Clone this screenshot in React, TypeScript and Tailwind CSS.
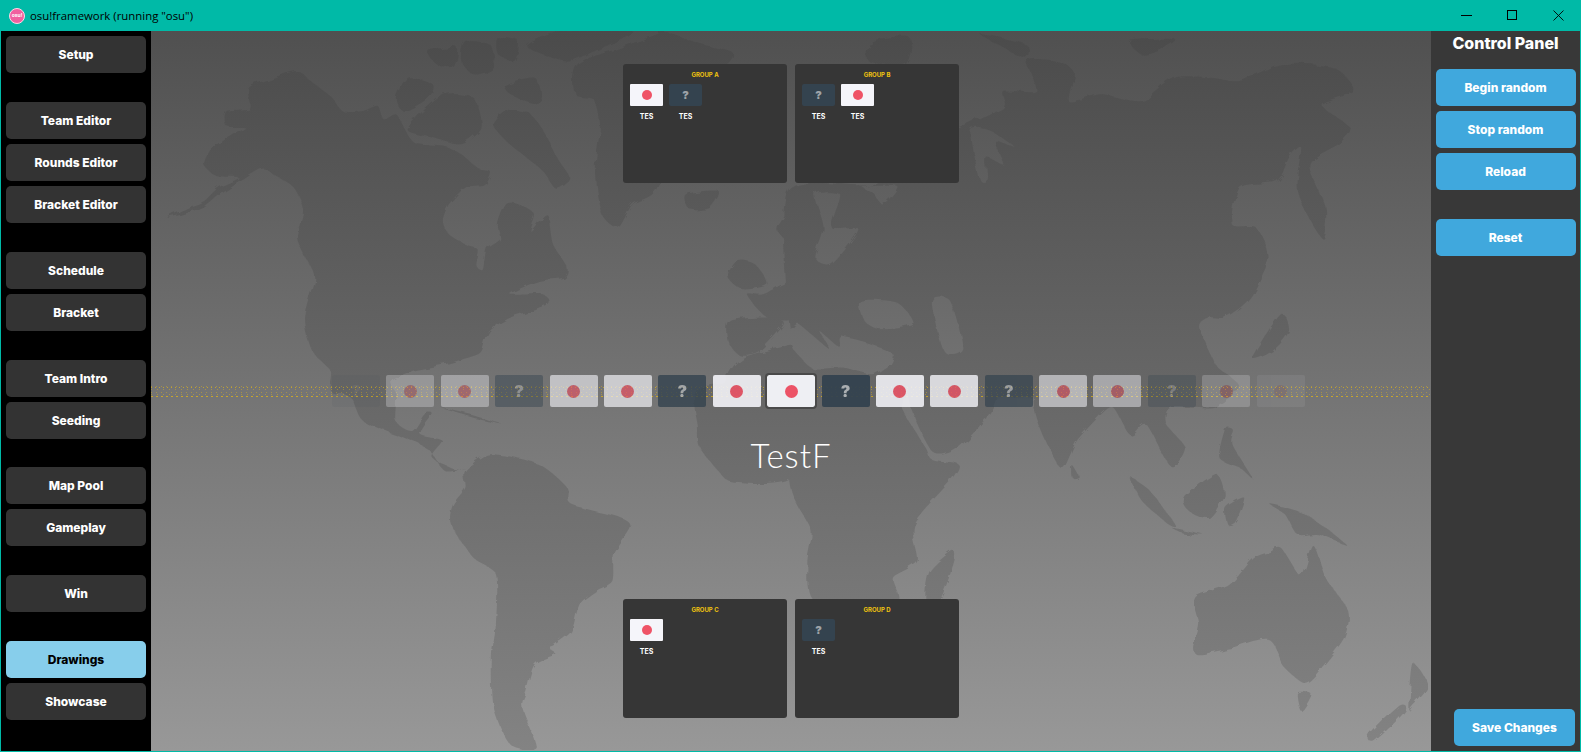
const sidebarGroups = [
  { items: ["Setup"], cls: "" },
  { items: ["Team Editor", "Rounds Editor", "Bracket Editor"], cls: "" },
  { items: ["Schedule", "Bracket"], cls: "" },
  { items: ["Team Intro", "Seeding"], cls: "" },
  { items: ["Map Pool", "Gameplay"], cls: "-mt-px" },
  { items: ["Win"], cls: "" },
  { items: ["Drawings", "Showcase"], cls: "" },
];

// ribbon of flags, f = flag, q = unknown team, s = selected
const ribbon = [
  { kind: "q", fade: "opacity-[0.06]" },
  { kind: "f", fade: "opacity-[0.27]" },
  { kind: "f", fade: "opacity-[0.36]" },
  { kind: "q", fade: "opacity-[0.45]" },
  { kind: "f", fade: "opacity-[0.6]" },
  { kind: "f", fade: "opacity-[0.68]" },
  { kind: "q", fade: "opacity-[0.8]" },
  { kind: "f", fade: "opacity-[0.89]" },
  { kind: "s", fade: "opacity-100" },
  { kind: "q", fade: "opacity-[0.95]" },
  { kind: "f", fade: "opacity-[0.87]" },
  { kind: "f", fade: "opacity-[0.8]" },
  { kind: "q", fade: "opacity-[0.7]" },
  { kind: "f", fade: "opacity-[0.55]" },
  { kind: "f", fade: "opacity-[0.45]" },
  { kind: "q", fade: "opacity-[0.3]" },
  { kind: "f", fade: "opacity-[0.2]" },
  { kind: "f", fade: "opacity-[0.07]" },
];

const bands = [
  { y: 2, dash: "1 4", o: 0.35 },
  { y: 3, dash: "1 3", o: 0.55 },
  { y: 5, dash: "1 5", o: 0.35 },
  { y: 8, dash: "1 4", o: 0.35 },
  { y: 10, dash: "1 5", o: 0.35 },
  { y: 12, dash: "2 3", o: 0.6 },
];

// coastlines are traced as point lists, this rounds them off
function smooth(d: string) {
  return d
    .split("M")
    .filter(Boolean)
    .map((part) => {
      const n = (part.match(/-?\d+/g) || []).map(Number);
      const pts: number[][] = [];
      for (let i = 0; i < n.length; i += 2) pts.push([n[i], n[i + 1]]);
      const len = pts.length;
      let out = `M${pts[0][0]} ${pts[0][1]}`;
      for (let i = 0; i < len; i++) {
        const p0 = pts[(i - 1 + len) % len];
        const p1 = pts[i];
        const p2 = pts[(i + 1) % len];
        const p3 = pts[(i + 2) % len];
        const c1x = p1[0] + (p2[0] - p0[0]) / 8;
        const c1y = p1[1] + (p2[1] - p0[1]) / 8;
        const c2x = p2[0] - (p3[0] - p1[0]) / 8;
        const c2y = p2[1] - (p3[1] - p1[1]) / 8;
        out += `C${c1x} ${c1y} ${c2x} ${c2y} ${p2[0]} ${p2[1]}`;
      }
      return out + "Z";
    })
    .join("");
}

const northWest = [
  "M40 560L90 530L130 510L165 470L215 440L160 435L130 400L150 350L190 320L230 290L185 285L185 240L240 230L240 170L300 140L360 120L390 150L440 195L470 240L520 240L555 225L570 265L600 250L620 290L640 330L670 340L720 345L760 370L800 410L830 420L815 460L770 470L730 520L715 570L730 610L770 640L800 655L795 700L815 720L825 655L855 625L850 580L870 520L900 520L940 550L930 600L970 550L985 640L1020 710L1010 740L950 750L880 790L960 790L970 820L880 860L830 900L810 960L790 975L720 1000L640 1020L590 1050L585 1085L445 1085L440 1020L395 960L375 860L400 740L380 680L360 620L375 540L350 470L300 430L270 410L215 450L165 490L130 525L90 545Z",
  "M630 140L690 160L680 200L620 240L600 200Z",
  "M680 60L750 50L740 110L700 100Z",
  "M770 30L830 40L840 110L790 130L760 90Z",
  "M840 280L880 235L930 250L970 320L1000 390L1025 440L990 470L960 420L910 370L870 330Z",
  "M920 40L1000 0L1180 0L1040 85L1010 90L960 70Z",
  "M850 20L900 30L890 90L850 70Z",
  "M870 160L940 140L960 200L940 220L880 190Z",
  "M720 190L790 200L810 290L760 340L690 320L630 300L650 260Z",
  "M1035 130L1055 90L1150 50L1240 10L1250 0L1350 40L1425 65L1420 95L1380 130L1300 220L1240 470L1180 520L1145 590L1110 560L1095 490L1090 400L1100 280L1085 205L1040 190Z",
  "M1310 490L1390 480L1370 530L1320 535Z",
  "M1415 740L1440 690L1480 700L1510 760L1450 775Z",
  "M1420 870L1520 860L1550 880L1490 960L1440 970L1415 930Z",
  "M1575 750L1500 790L1460 790L1510 860L1575 860Z",
  "M1550 560L1575 540L1575 640L1535 600Z",
  "M1410 1090L1415 1030L1450 980L1540 950L1575 950L1575 1090Z",
];

const northEast = [
  "M-5 480L200 460L300 350L415 290L520 230L520 180L600 180L580 90L650 90L690 120L680 210L760 190L860 210L940 140L1030 140L1100 150L1200 100L1330 110L1380 180L1300 220L1370 290L1340 340L1270 400L1310 530L1300 620L1240 480L1250 350L1220 380L1190 450L1100 470L1080 580L1140 590L1170 680L1130 790L1100 830L1060 860L1020 860L1000 890L1040 1000L1060 1090L270 1090L250 970L130 920L120 950L70 900L90 950L20 880L-5 870Z",
  "M-5 950L50 1010L130 1010L200 1030L250 1000L260 1090L-5 1090Z",
  "M465 10L575 40L575 80L520 50Z",
  "M200 30L290 20L280 100L190 90Z",
  "M830 30L940 25L900 60L860 70Z",
  "M1130 980L1200 850L1220 900L1180 960Z",
];

// water cut out of the big land mass
const northEastWater = [
  "M60 490L120 490L100 590L165 595L100 700L60 680L80 590Z",
  "M170 810L260 815L300 880L220 895L180 870Z",
  "M345 810L390 810L420 950L375 960Z",
  "M440 300L490 300L550 350L500 330L520 400L480 380L480 440L460 440Z",
  "M175 465L260 465L225 520L205 490Z",
];

const southWest = [
  "M440 -10L590 -10L600 90L640 120L670 70L690 70L660 130L715 150L690 200L745 235L770 230L720 240L680 175L620 140L520 90L490 20Z",
  "M770 240L830 190L950 220L1020 290L1030 340L1150 380L1175 410L1135 490L1130 570L1090 600L1050 640L1030 720L990 760L975 770L990 790L940 820L920 900L910 950L945 1070L880 1060L840 950L835 800L845 700L845 550L790 500L735 400L740 340L770 290Z",
  "M710 50L780 70L860 100L790 80Z",
  "M1345 -10L1340 110L1345 170L1390 240L1430 275L1575 255L1575 -10Z",
];

const southEast = [
  "M-5 -10L270 -10L270 50L330 170L345 205L410 220L390 270L300 400L310 510L250 560L255 630L60 630L40 520L50 420L15 340L-5 260Z",
  "M290 -10L490 -10L490 60L410 170L345 180Z",
  "M610 -10L1060 -10L1040 50L930 50L920 100L965 170L930 225L870 100L830 130L790 50L760 70L700 150L660 230Z",
  "M690 225L705 255L690 260Z",
  "M340 540L395 480L400 510L365 625L330 625Z",
  "M835 265L880 300L940 400L920 395L860 330Z",
  "M935 410L1010 430L960 425Z",
  "M965 320L1040 250L1060 310L1025 380L975 360Z",
  "M1065 350L1110 320L1090 390L1070 400Z",
  "M1065 110L1085 120L1080 160L1130 260L1100 230L1050 200Z",
  "M1175 340L1260 370L1360 460L1290 430L1240 430L1210 370Z",
  "M990 620L1070 580L1130 500L1170 480L1200 470L1250 555L1280 465L1310 560L1365 660L1355 740L1300 830L1260 875L1210 830L1170 745L1080 770L1000 790L985 770L1000 700Z",
  "M1240 905L1275 910L1250 960Z",
  "M1415 1030L1490 940L1505 960L1430 1050Z",
  "M1515 950L1525 820L1560 885L1520 950Z",
];

function SideButton({ label, active }: { label: string; active?: boolean }) {
  return (
    <button
      className={`h-[37px] w-[140px] rounded-[5px] pt-px text-[12px] font-extrabold ${
        active ? "bg-[#87ceeb] text-black" : "bg-[#333333] text-white"
      }`}
    >
      {label}
    </button>
  );
}

function PanelButton({ label, width = "w-[140px]" }: { label: string; width?: string }) {
  return (
    <button className={`h-[37px] ${width} rounded-[5px] bg-[#40a8dd] pt-px text-[12px] font-extrabold text-white`}>
      {label}
    </button>
  );
}

function GroupCard({ title, teams }: { title: string; teams: string[] }) {
  return (
    <div className="flex h-[119px] w-[164px] flex-col rounded-[3px] bg-[#363636] px-[7px] pt-[7px]">
      <div className="text-center text-[6px] leading-[7px] font-bold text-[#f1c40f]">{title}</div>
      <div className="mt-[6px] flex gap-[6px]">
        {teams.map((t, i) => (
          <div key={i} className="flex w-[33px] flex-col items-center">
            {t === "f" ? (
              <div className="flex h-[22px] w-[33px] items-center justify-center rounded-[1px] bg-[#f5f5fa]">
                <div className="h-[10px] w-[10px] rounded-full bg-[#ef5366]" />
              </div>
            ) : (
              <div className="flex h-[22px] w-[33px] items-center justify-center rounded-[2px] bg-[#34434f] text-[11px] font-black text-[#9ea3a8]">
                ?
              </div>
            )}
            <div className="mt-[6px] text-[7px] leading-[9px] font-bold text-white">TES</div>
          </div>
        ))}
      </div>
    </div>
  );
}

function RibbonFlag({ kind, fade }: { kind: string; fade: string }) {
  if (kind === "q") {
    return (
      <div className={`flex h-[32px] w-[48px] shrink-0 items-center justify-center rounded-[2px] bg-[#34434f] text-[16px] font-black text-[#aeb2b6] ${fade}`}>
        ?
      </div>
    );
  }
  return (
    <div
      className={`flex h-[32px] w-[48px] shrink-0 items-center justify-center rounded-[2px] ${fade} ${
        kind === "s" ? "bg-[#eeeff3] outline-2 outline-[#4a4a4a]" : "bg-[#f5f5fa]"
      }`}
    >
      <div className="h-[13px] w-[13px] rounded-full bg-[#ec5366]" />
    </div>
  );
}

function Quadrant({ x, y, land }: { x: number; y: number; land: string[] }) {
  return (
    <g transform={`translate(${x},${y}) scale(0.40816,0.3333)`}>
      {land.map((d, i) => (
        <path key={i} d={smooth(d)} />
      ))}
    </g>
  );
}

function WorldMap() {
  return (
    <svg className="absolute inset-0 h-full w-full" viewBox="0 0 1280 720" preserveAspectRatio="none">
      <defs>
        <linearGradient id="bg" x1="0" y1="0" x2="0" y2="1">
          <stop offset="0" stopColor="#505050" />
          <stop offset="1" stopColor="#989898" />
        </linearGradient>
        <linearGradient id="land" x1="0" y1="0" x2="0" y2="1">
          <stop offset="0" stopColor="#4b4b4b" />
          <stop offset="1" stopColor="#838383" />
        </linearGradient>
        <filter id="coast" x="0" y="0" width="100%" height="100%">
          <feTurbulence type="fractalNoise" baseFrequency="0.07" numOctaves="3" seed="4" />
          <feDisplacementMap in="SourceGraphic" scale="7" />
        </filter>
        <mask id="land-mask" maskUnits="userSpaceOnUse" x="0" y="0" width="1280" height="720">
          <g fill="#fff" filter="url(#coast)">
            <Quadrant x={0} y={0} land={northWest} />
            <Quadrant x={640} y={0} land={northEast} />
            <Quadrant x={0} y={360} land={southWest} />
            <Quadrant x={640} y={360} land={southEast} />
            <g fill="#000">
              <Quadrant x={640} y={0} land={northEastWater} />
            </g>
          </g>
        </mask>
      </defs>
      <rect width="1280" height="720" fill="url(#bg)" />
      <rect width="1280" height="720" fill="url(#land)" mask="url(#land-mask)" />
    </svg>
  );
}

function DottedBands() {
  return (
    <svg className="absolute top-[9px] left-0 h-[14px] w-full" shapeRendering="crispEdges">
      {bands.map((b) => (
        <line
          key={b.y}
          x1="0"
          x2="100%"
          y1={b.y + 0.5}
          y2={b.y + 0.5}
          stroke="#ffc800"
          strokeDasharray={b.dash}
          opacity={b.o}
        />
      ))}
    </svg>
  );
}

function WindowControls() {
  return (
    <div className="ml-auto flex items-center">
      <div className="flex h-[31px] w-[46px] items-center justify-center">
        <svg width="11" height="11" viewBox="0 0 11 11" shapeRendering="crispEdges">
          <path d="M0 5.5H11" stroke="#000" />
        </svg>
      </div>
      <div className="flex h-[31px] w-[46px] items-center justify-center">
        <svg width="11" height="11" viewBox="0 0 11 11" shapeRendering="crispEdges">
          <rect x="0.5" y="0.5" width="9" height="9" fill="none" stroke="#000" />
        </svg>
      </div>
      <div className="flex h-[31px] w-[46px] items-center justify-center">
        <svg width="11" height="11" viewBox="0 0 11 11">
          <path d="M0.5 0.5L10.5 10.5M10.5 0.5L0.5 10.5" stroke="#000" strokeWidth="0.9" />
        </svg>
      </div>
    </div>
  );
}

export default function App() {
  return (
    <div className="flex h-[752px] w-[1581px] flex-col overflow-hidden bg-[#00baa7] font-['Inter',sans-serif]">
      {/* title bar */}
      <div className="flex h-[31px] shrink-0 items-center pl-[9px] text-black">
        <div className="flex h-[16px] w-[16px] items-center justify-center rounded-full border border-[#ffd9e8] bg-[#f0609f] text-[5px] font-bold text-white">
          osu!
        </div>
        <span className="ml-[5px] font-['Open_Sans',sans-serif] text-[11.4px]">osu!framework (running "osu")</span>
        <WindowControls />
      </div>

      <div className="flex min-h-0 flex-1 px-px pb-px">
        {/* left nav */}
        <div className="flex w-[150px] shrink-0 flex-col gap-[29px] bg-black pt-[5px] pl-[5px]">
          {sidebarGroups.map((group) => (
            <div key={group.items[0]} className={`flex flex-col gap-[5px] ${group.cls}`}>
              {group.items.map((label) => (
                <SideButton key={label} label={label} active={label === "Drawings"} />
              ))}
            </div>
          ))}
        </div>

        {/* stage */}
        <div className="relative min-w-0 flex-1">
          <WorldMap />
          <div className="relative flex h-full flex-col">
            <div className="mt-[33px] flex justify-center gap-[8px]">
              <GroupCard title="GROUP A" teams={["f", "q"]} />
              <GroupCard title="GROUP B" teams={["q", "f"]} />
            </div>
            <div className="relative mt-[192px] flex gap-[6.4px] pl-[181px]">
              <DottedBands />
              {ribbon.map((r, i) => (
                <div key={i} className="relative">
                  <RibbonFlag kind={r.kind} fade={r.fade} />
                </div>
              ))}
            </div>
            <div className="mt-[25px] text-center font-['Lato',sans-serif] text-[33px] leading-[46px] font-light tracking-[1px] text-white">
              TestF
            </div>
            <div className="mt-auto mb-[33px] flex justify-center gap-[8px]">
              <GroupCard title="GROUP C" teams={["f"]} />
              <GroupCard title="GROUP D" teams={["q"]} />
            </div>
          </div>
        </div>

        {/* control panel */}
        <div className="flex w-[149px] shrink-0 flex-col items-center bg-[#383838] px-[5px] pb-[5px]">
          <div className="mt-[2px] mb-[16px] text-[16px] leading-[20px] font-extrabold text-white">Control Panel</div>
          <div className="flex flex-col gap-[5px]">
            <PanelButton label="Begin random" />
            <PanelButton label="Stop random" />
            <PanelButton label="Reload" />
          </div>
          <div className="mt-[29px]">
            <PanelButton label="Reset" />
          </div>
          <div className="mt-auto self-end">
            <PanelButton label="Save Changes" width="w-[121px]" />
          </div>
        </div>
      </div>
    </div>
  );
}
